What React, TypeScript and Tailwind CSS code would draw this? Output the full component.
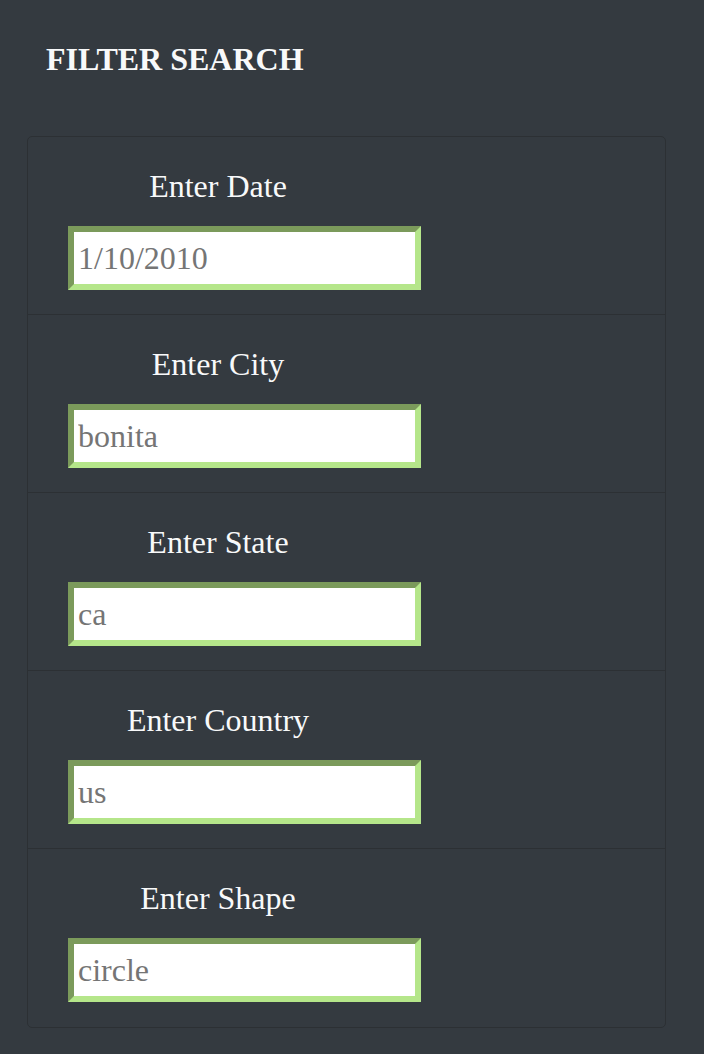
import React from "react";

const fields = [
  { label: "Enter Date", value: "1/10/2010" },
  { label: "Enter City", value: "bonita" },
  { label: "Enter State", value: "ca" },
  { label: "Enter Country", value: "us" },
  { label: "Enter Shape", value: "circle" },
];

export default function App() {
  return (
    <div
      className="min-h-[1054px] w-full bg-[#343a40] text-white"
      style={{ fontFamily: '"Liberation Serif", "Times New Roman", serif' }}
    >
      <div className="pl-[46px] pt-[35px]">
        <h1 className="text-[32px] font-bold leading-[48px] text-[#f8f9fa]">FILTER SEARCH</h1>
      </div>
      <div className="mx-[27px] mt-[53px] w-[639px] rounded-[5px] border border-[#2c3034]">
        {fields.map((f, i) => (
          <div
            key={f.label}
            className={
              i < fields.length - 1
                ? "border-b border-[#2c3034] pl-[40px] pt-[25px] pb-[24px]"
                : "pl-[40px] pt-[25px] pb-[25px]"
            }
          >
            <div className="w-[300px] text-center text-[32px] leading-[48px] text-[#f8f9fa]">{f.label}</div>
            <input
              readOnly
              value={f.value}
              className="mt-[16px] box-border block h-[64px] w-[353px] border-[6px] border-solid border-t-[#7b9a5b] border-l-[#7b9a5b] border-b-[#b5e68a] border-r-[#b5e68a] bg-white pl-[4px] pr-[2px] text-[32px] text-[#757575] outline-none"
              style={{ fontFamily: '"Liberation Serif", "Times New Roman", serif' }}
            />
          </div>
        ))}
      </div>
    </div>
  );
}
